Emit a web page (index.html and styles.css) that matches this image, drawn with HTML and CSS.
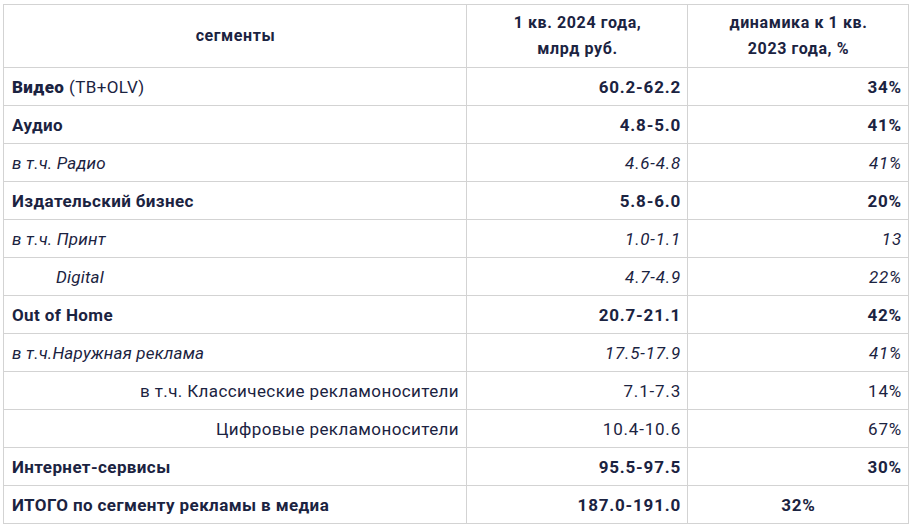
FILE: index.html
```html
<!DOCTYPE html>
<html lang="ru">
<head>
<meta charset="utf-8">
<link rel="stylesheet" href="styles.css">
</head>
<body>
<table class="media-table">
  <colgroup>
    <col class="c1"><col class="c2"><col class="c3">
  </colgroup>
  <thead>
    <tr>
      <th>сегменты</th>
      <th>1 кв. 2024 года,<br>млрд руб.</th>
      <th>динамика к 1 кв.<br>2023 года, %</th>
    </tr>
  </thead>
  <tbody>
    <tr class="b"><td><strong>Видео</strong> <span class="reg">(ТВ+OLV)</span></td><td class="num">60.2-62.2</td><td class="num">34%</td></tr>
    <tr class="b"><td>Аудио</td><td class="num">4.8-5.0</td><td class="num">41%</td></tr>
    <tr class="i"><td>в т.ч. Радио</td><td class="num">4.6-4.8</td><td class="num">41%</td></tr>
    <tr class="b"><td>Издательский бизнес</td><td class="num">5.8-6.0</td><td class="num">20%</td></tr>
    <tr class="i"><td>в т.ч. Принт</td><td class="num">1.0-1.1</td><td class="num">13</td></tr>
    <tr class="i"><td class="indent">Digital</td><td class="num">4.7-4.9</td><td class="num">22%</td></tr>
    <tr class="b"><td>Out of Home</td><td class="num">20.7-21.1</td><td class="num">42%</td></tr>
    <tr class="i"><td>в т.ч.Наружная реклама</td><td class="num">17.5-17.9</td><td class="num">41%</td></tr>
    <tr><td class="right">в т.ч. Классические рекламоносители</td><td class="num">7.1-7.3</td><td class="num">14%</td></tr>
    <tr><td class="right">Цифровые рекламоносители</td><td class="num">10.4-10.6</td><td class="num">67%</td></tr>
    <tr class="b"><td>Интернет-сервисы</td><td class="num">95.5-97.5</td><td class="num">30%</td></tr>
    <tr class="b"><td>ИТОГО по сегменту рекламы в медиа</td><td class="num">187.0-191.0</td><td class="center">32%</td></tr>
  </tbody>
</table>
</body>
</html>
```
FILE: styles.css
```css
html, body {
  margin: 0;
  background: #ffffff;
}
body {
  padding: 4px 0 0 3px;
  font-family: Roboto, "Liberation Sans", sans-serif;
  font-size: 17px;
  color: #1b2341;
}
.media-table {
  border-collapse: collapse;
  table-layout: fixed;
  width: 905px;
}
.c1 { width: 463px; }
.c2 { width: 221px; }
.c3 { width: 221px; }
.media-table th,
.media-table td {
  border: 1px solid #d3d3d3;
  padding: 0 7px 0 8px;
  vertical-align: middle;
  letter-spacing: 0.4px;
}
.media-table th {
  height: 62px;
  font-weight: 700;
  font-size: 16px;
  line-height: 26px;
  text-align: center;
  letter-spacing: 0.6px;
}
.media-table td {
  height: 37px;
  line-height: 20px;
  text-align: left;
}
.b td { font-weight: 700; }
.i td { font-style: italic; font-weight: 400; letter-spacing: 0.2px; }
.reg { font-weight: 400; }
.media-table .num {
  text-align: right;
  letter-spacing: 0.8px;
  padding-right: 6px;
}
.media-table .center { text-align: center; letter-spacing: 0.8px; }
.media-table .right { text-align: right; }
.media-table .indent { padding-left: 52px; }
```
